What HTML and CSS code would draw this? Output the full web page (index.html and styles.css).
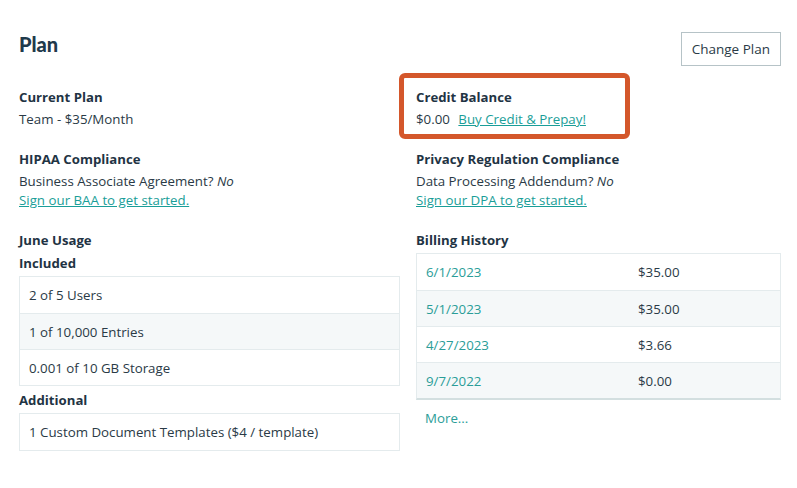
FILE: index.html
```html
<!DOCTYPE html>
<html>
<head>
<meta charset="utf-8">
<link rel="stylesheet" href="styles.css">
</head>
<body>
<div class="page">
  <div class="header">
    <h1 class="title">Plan</h1>
    <button class="btn">Change Plan</button>
  </div>
  <div class="grid">
    <div class="col col-left">
      <div class="block">
        <h3 class="label">Current Plan</h3>
        <div class="text">Team - $35/Month</div>
      </div>
      <div class="block">
        <h3 class="label">HIPAA Compliance</h3>
        <div class="text">Business Associate Agreement? <em>No</em></div>
        <div class="text"><a class="link" href="#">Sign our BAA to get started.</a></div>
      </div>
      <div class="block">
        <h3 class="label">June Usage</h3>
        <h3 class="label">Included</h3>
        <div class="table">
          <div class="row">2 of 5 Users</div>
          <div class="row alt">1 of 10,000 Entries</div>
          <div class="row">0.001 of 10 GB Storage</div>
        </div>
        <h3 class="label sub">Additional</h3>
        <div class="table">
          <div class="row">1 Custom Document Templates ($4 / template)</div>
        </div>
      </div>
    </div>
    <div class="col col-right">
      <div class="block highlight-wrap">
        <h3 class="label">Credit Balance</h3>
        <div class="text">$0.00 <a class="link buy" href="#">Buy Credit &amp; Prepay!</a></div>
        <div class="highlight"></div>
      </div>
      <div class="block">
        <h3 class="label">Privacy Regulation Compliance</h3>
        <div class="text">Data Processing Addendum? <em>No</em></div>
        <div class="text"><a class="link" href="#">Sign our DPA to get started.</a></div>
      </div>
      <div class="block">
        <h3 class="label">Billing History</h3>
        <div class="table billing">
          <div class="row brow"><span class="date">6/1/2023</span><span class="amt">$35.00</span></div>
          <div class="row brow alt"><span class="date">5/1/2023</span><span class="amt">$35.00</span></div>
          <div class="row brow"><span class="date">4/27/2023</span><span class="amt">$3.66</span></div>
          <div class="row brow alt"><span class="date">9/7/2022</span><span class="amt">$0.00</span></div>
        </div>
        <div class="more">More...</div>
      </div>
    </div>
  </div>
</div>
</body>
</html>
```
FILE: styles.css
```css
* { box-sizing: border-box; }
body {
  margin: 0;
  background: #fff;
  font-family: "Open Sans", "Noto Sans", sans-serif;
  font-size: 13.3px;
  color: #2a3a46;
}
.page {
  padding: 32px 16px 0 19px;
}
.header {
  display: flex;
  justify-content: space-between;
  align-items: flex-start;
}
.title {
  margin: 0;
  font-family: Lato, "Open Sans", sans-serif;
  font-weight: 900;
  font-size: 20px;
  line-height: 24px;
  color: #1f3a4c;
}
.btn {
  height: 34px;
  padding: 0 10px;
  background: #fff;
  border: 1px solid #b6c3c7;
  border-radius: 0;
  font-family: "Open Sans", "Noto Sans", sans-serif;
  font-size: 13.5px;
  color: #2a3a46;
}
.grid {
  display: grid;
  grid-template-columns: 381px 1fr;
  margin-top: 21px;
}
.col-right { padding-left: 16px; }
.block { margin-bottom: 20px; }
.label {
  margin: 0 0 3px;
  font-size: 13.2px;
  font-weight: 700;
  line-height: 20px;
  color: #1f3444;
}
.label.sub { margin-top: 4px; }
.text {
  line-height: 19px;
}
.text em { font-style: italic; }
.link {
  color: #1a9e98;
  text-decoration: underline;
}
.buy { margin-left: 5px; }
.table {
  border: 1px solid #e4ebed;
  margin-bottom: 3px;
}
.row {
  height: 36px;
  display: flex;
  align-items: center;
  padding: 0 9px;
  border-top: 1px solid #e4ebed;
}
.row:first-child { border-top: none; }
.row.alt { background: #f5f8f9; }
.billing { border-bottom: 2px solid #d3dfe0; }
.brow { height: 36px; }
.date {
  width: 212px;
  color: #2a9d98;
}
.amt { color: #2a3a46; }
.more {
  padding: 6px 9px 0;
  line-height: 19px;
  color: #2a9d98;
}
.highlight-wrap { position: relative; }
.highlight {
  position: absolute;
  left: -17px;
  top: -14px;
  width: 231px;
  height: 66px;
  border: 5px solid #d4572b;
  border-radius: 6px;
  pointer-events: none;
}
```
